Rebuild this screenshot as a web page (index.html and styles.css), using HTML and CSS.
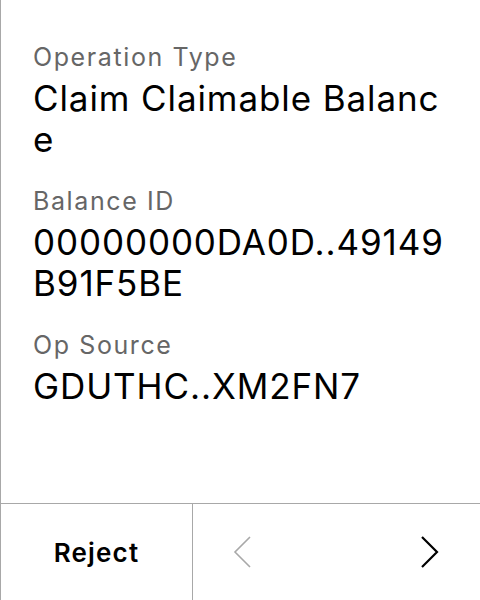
FILE: index.html
```html
<!DOCTYPE html>
<html>
<head>
<meta charset="utf-8">
<link rel="stylesheet" href="styles.css">
</head>
<body>
<div class="screen">
  <div class="content">
    <div class="field">
      <div class="label">Operation Type</div>
      <div class="value">Claim Claimable Balance</div>
    </div>
    <div class="field">
      <div class="label">Balance ID</div>
      <div class="value">00000000DA0D..49149B91F5BE</div>
    </div>
    <div class="field">
      <div class="label">Op Source</div>
      <div class="value">GDUTHC..XM2FN7</div>
    </div>
  </div>
  <div class="footer">
    <div class="reject">Reject</div>
    <div class="nav">
      <svg class="chev" width="20" height="32" viewBox="0 0 20 32"><path d="M18 1 L3 16 L18 31" fill="none" stroke="#a8a8a8" stroke-width="1.6"/></svg>
      <svg class="chev" width="20" height="32" viewBox="0 0 20 32"><path d="M2 1 L17 16 L2 31" fill="none" stroke="#000" stroke-width="2.2"/></svg>
    </div>
  </div>
</div>
</body>
</html>
```
FILE: styles.css
```css
html, body {
  margin: 0;
  padding: 0;
  background: #fff;
}
.screen {
  width: 480px;
  height: 600px;
  box-sizing: border-box;
  border-left: 1px solid #a8a8a8;
  display: flex;
  flex-direction: column;
  font-family: Inter, "Noto Sans", sans-serif;
  color: #000;
}
.content {
  flex: 1;
  padding: 41px 26px 0 32px;
  display: flex;
  flex-direction: column;
  gap: 25px;
}
.field {
  display: flex;
  flex-direction: column;
  gap: 5px;
}
.label {
  font-size: 25px;
  line-height: 32px;
  letter-spacing: 1.6px;
  color: #666;
}
.value {
  font-size: 35px;
  line-height: 41px;
  letter-spacing: 0.9px;
  word-break: break-all;
}
.footer {
  height: 96px;
  border-top: 1px solid #a8a8a8;
  display: flex;
}
.reject {
  width: 191px;
  border-right: 1px solid #a8a8a8;
  display: flex;
  align-items: center;
  justify-content: center;
  font-size: 26px;
  font-weight: 600;
  letter-spacing: 1.2px;
}
.nav {
  flex: 1;
  display: flex;
  align-items: center;
  justify-content: space-between;
  padding: 0 40px 0 39px;
}
.chev {
  display: block;
}
```
